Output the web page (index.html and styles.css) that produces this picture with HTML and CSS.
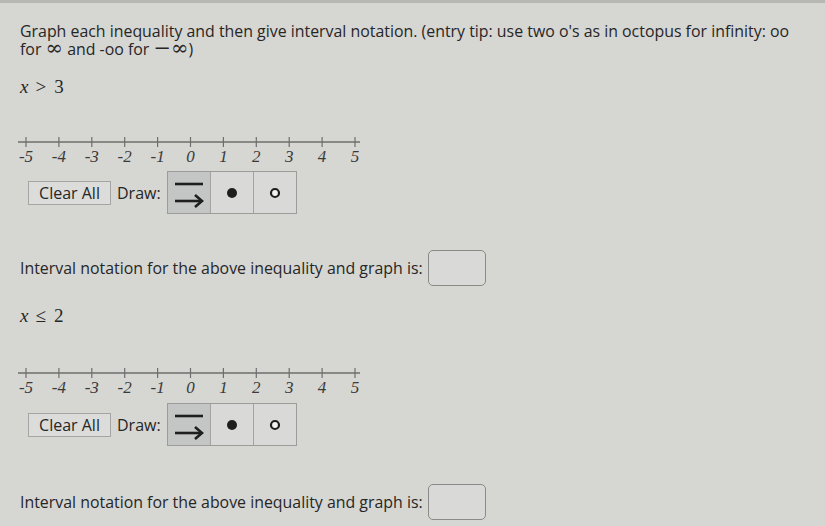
FILE: index.html
```html
<!DOCTYPE html>
<html lang="en">
<head>
<meta charset="utf-8">
<title>Graph each inequality</title>
<link rel="stylesheet" href="styles.css">
</head>
<body>
<div class="page">
  <p class="prompt">Graph each inequality and then give interval notation. (entry tip: use two o's as in octopus for infinity: oo<br>for <span class="inf">&infin;</span> and -oo for <span class="inf">&minus;&infin;</span>)</p>

  <section class="problem">
    <div class="math"><i>x</i><span class="rel">&gt;</span>3</div>
    <svg class="numline" width="350" height="34" viewBox="0 0 350 34">
      <line class="axis" x1="0" y1="7" x2="342" y2="7"/>
      <g class="ticks">
        <line x1="8" y1="2" x2="8" y2="12"/><line x1="40.9" y1="2" x2="40.9" y2="12"/><line x1="73.8" y1="2" x2="73.8" y2="12"/><line x1="106.7" y1="2" x2="106.7" y2="12"/><line x1="139.6" y1="2" x2="139.6" y2="12"/><line x1="172.5" y1="2" x2="172.5" y2="12"/><line x1="205.4" y1="2" x2="205.4" y2="12"/><line x1="238.3" y1="2" x2="238.3" y2="12"/><line x1="271.2" y1="2" x2="271.2" y2="12"/><line x1="304.1" y1="2" x2="304.1" y2="12"/><line x1="337" y1="2" x2="337" y2="12"/>
      </g>
      <g class="labels">
        <text x="8" y="27">-5</text><text x="40.9" y="27">-4</text><text x="73.8" y="27">-3</text><text x="106.7" y="27">-2</text><text x="139.6" y="27">-1</text><text x="172.5" y="27">0</text><text x="205.4" y="27">1</text><text x="238.3" y="27">2</text><text x="271.2" y="27">3</text><text x="304.1" y="27">4</text><text x="337" y="27">5</text>
      </g>
    </svg>
    <div class="tools">
      <button class="clear">Clear All</button>
      <span class="draw">Draw:</span>
      <div class="toolbox">
        <span class="tool selected">
          <svg width="32" height="30" viewBox="0 0 32 30"><line x1="2" y1="6" x2="30" y2="6" class="stroke"/><line x1="2" y1="23" x2="28" y2="23" class="stroke"/><polyline points="22,17 29,23 22,29" class="stroke" fill="none"/></svg>
        </span>
        <span class="tool"><svg width="12" height="12" viewBox="0 0 12 12"><circle cx="6" cy="6" r="5" class="dot"/></svg></span>
        <span class="tool"><svg width="12" height="12" viewBox="0 0 12 12"><circle cx="6" cy="6" r="4" class="ring"/></svg></span>
      </div>
    </div>
    <div class="answer">Interval notation for the above inequality and graph is: <span class="field"></span></div>
  </section>

  <section class="problem second">
    <div class="math"><i>x</i><span class="rel">&le;</span>2</div>
    <svg class="numline" width="350" height="34" viewBox="0 0 350 34">
      <line class="axis" x1="0" y1="7" x2="342" y2="7"/>
      <g class="ticks">
        <line x1="8" y1="2" x2="8" y2="12"/><line x1="40.9" y1="2" x2="40.9" y2="12"/><line x1="73.8" y1="2" x2="73.8" y2="12"/><line x1="106.7" y1="2" x2="106.7" y2="12"/><line x1="139.6" y1="2" x2="139.6" y2="12"/><line x1="172.5" y1="2" x2="172.5" y2="12"/><line x1="205.4" y1="2" x2="205.4" y2="12"/><line x1="238.3" y1="2" x2="238.3" y2="12"/><line x1="271.2" y1="2" x2="271.2" y2="12"/><line x1="304.1" y1="2" x2="304.1" y2="12"/><line x1="337" y1="2" x2="337" y2="12"/>
      </g>
      <g class="labels">
        <text x="8" y="27">-5</text><text x="40.9" y="27">-4</text><text x="73.8" y="27">-3</text><text x="106.7" y="27">-2</text><text x="139.6" y="27">-1</text><text x="172.5" y="27">0</text><text x="205.4" y="27">1</text><text x="238.3" y="27">2</text><text x="271.2" y="27">3</text><text x="304.1" y="27">4</text><text x="337" y="27">5</text>
      </g>
    </svg>
    <div class="tools">
      <button class="clear">Clear All</button>
      <span class="draw">Draw:</span>
      <div class="toolbox">
        <span class="tool selected">
          <svg width="32" height="30" viewBox="0 0 32 30"><line x1="2" y1="6" x2="30" y2="6" class="stroke"/><line x1="2" y1="23" x2="28" y2="23" class="stroke"/><polyline points="22,17 29,23 22,29" class="stroke" fill="none"/></svg>
        </span>
        <span class="tool"><svg width="12" height="12" viewBox="0 0 12 12"><circle cx="6" cy="6" r="5" class="dot"/></svg></span>
        <span class="tool"><svg width="12" height="12" viewBox="0 0 12 12"><circle cx="6" cy="6" r="4" class="ring"/></svg></span>
      </div>
    </div>
    <div class="answer">Interval notation for the above inequality and graph is: <span class="field"></span></div>
  </section>
</div>
</body>
</html>
```

FILE: styles.css
```css
html, body {
  margin: 0;
  height: 100%;
}

body {
  background: #d6d6d3;
  border-top: 3px solid #b7b7b4;
  box-sizing: border-box;
  font-family: "Open Sans", Lato, sans-serif;
  font-variant-ligatures: none;
  color: #262626;
  overflow: hidden;
}

.page {
  padding: 20px 0 0 20px;
}

.prompt {
  margin: 0;
  font-size: 15.9px;
  line-height: 17.5px;
}

.inf {
  font-family: "DejaVu Serif", serif;
  font-size: 21px;
  line-height: 0;
}

.math {
  font-family: "Liberation Serif", "DejaVu Serif", serif;
  font-size: 19px;
  line-height: 22px;
  margin-top: 18px;
  display: flex;
  align-items: baseline;
}

.math i {
  font-style: italic;
}

.math .rel {
  margin: 0 8px 0 7px;
}

.numline {
  display: block;
  margin: 37px 0 0 -2px;
  overflow: visible;
}

.numline .axis {
  stroke: #6e6e6e;
  stroke-width: 1.6;
}

.numline .ticks line {
  stroke: #6e6e6e;
  stroke-width: 1.2;
}

.numline .labels text {
  font-family: "Liberation Serif", "DejaVu Serif", serif;
  font-style: italic;
  font-size: 17px;
  fill: #3a3a3a;
  text-anchor: middle;
}

.tools {
  display: flex;
  align-items: center;
  margin: 2px 0 0 8px;
}

.clear {
  width: 83px;
  height: 24px;
  padding: 0;
  font-family: inherit;
  font-size: 16px;
  color: #262626;
  background: #dcdcda;
  border: 1px solid #a5a5a3;
  border-radius: 0;
}

.draw {
  font-size: 16px;
  margin: 0 6px 0 6px;
}

.toolbox {
  display: flex;
  border: 1px solid #9c9c9a;
  background: #d9d9d7;
}

.tool {
  width: 42px;
  height: 41px;
  display: flex;
  align-items: center;
  justify-content: center;
}

.tool + .tool {
  border-left: 1px solid #a3a3a1;
}

.tool.selected {
  background: #c4c6c6;
}

.stroke {
  stroke: #1e1e1e;
  stroke-width: 2.6;
}

.dot {
  fill: #1e1e1e;
}

.ring {
  fill: #f2f2f0;
  stroke: #1e1e1e;
  stroke-width: 2.2;
}

.answer {
  display: flex;
  align-items: center;
  font-size: 15.9px;
  margin-top: 36px;
}

.field {
  width: 56px;
  height: 34px;
  margin-left: 5px;
  border: 1.5px solid #8a8a88;
  border-radius: 5px;
  background: #d9d9d7;
}

.second {
  margin-top: 19px;
}

.second .numline {
  margin-top: 39px;
}

.second .tools {
  margin-top: 3px;
}

.second .answer {
  margin-top: 38px;
}
```
